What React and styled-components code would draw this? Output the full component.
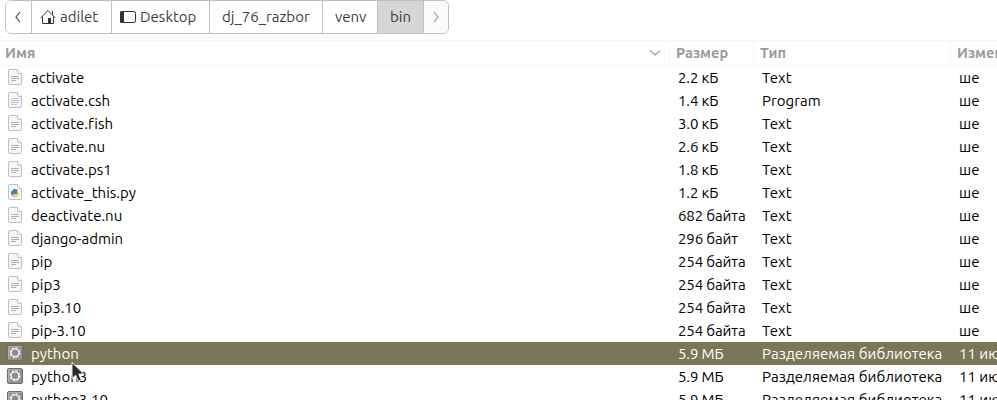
import React from "react";
import styled, { createGlobalStyle } from "styled-components";

const Global = createGlobalStyle`
  * { box-sizing: border-box; }
  html, body { margin: 0; height: 400px; overflow: hidden; background: #fff; }
  body { font-family: Ubuntu, "Noto Sans", sans-serif; font-size: 15px; color: #000; font-variant-ligatures: none; }
`;

const Window = styled.div`
  position: relative;
  width: 997px;
  height: 400px;
  overflow: hidden;
  background: #fff;
`;

const Toolbar = styled.nav`
  height: 40px;
  padding-left: 5px;
  display: flex;
  align-items: flex-start;
`;

const PathBar = styled.div`
  display: flex;
  height: 34px;
  border: 1px solid #c1c1c1;
  border-radius: 6px;
  overflow: hidden;
`;

const Crumb = styled.div`
  width: ${(p) => p.$width}px;
  height: 32px;
  padding-left: ${(p) => p.$pad}px;
  display: flex;
  align-items: center;
  gap: 4px;
  color: #3d3d3d;
  background: ${(p) => p.$bg || "#fff"};
  border-right: ${(p) => (p.$last ? "0" : "1px solid #c1c1c1")};
`;

const Label = styled.span`
  line-height: 20px;
  white-space: nowrap;
`;

const Header = styled.div`
  display: grid;
  grid-template-columns: 670px 84px 197px 46px;
  height: 26px;
  border-top: 1px solid #f7f7f7;
  border-bottom: 1px solid #f7f7f7;
  color: #9a9a9a;
  font-size: 14.6px;
  font-weight: 700;
`;

const HeaderCell = styled.div`
  display: flex;
  align-items: center;
  justify-content: space-between;
  padding: 0 8px 0 ${(p) => p.$pad || 6}px;
  border-right: 1px solid #f7f7f7;

  &:last-child {
    padding-right: 0;
    border-right: 0;
  }
`;

const Row = styled.div`
  display: grid;
  grid-template-columns: 31px 647px 84px 197px 38px;
  align-items: center;
  height: 23px;
  color: ${(p) => (p.$selected ? "#fff" : "#000")};
  background: ${(p) => (p.$selected ? "#7a7757" : "#fff")};
`;

const IconCell = styled.div`
  display: flex;
  align-items: center;
  height: 22px;
  padding-left: 7px;
  align-self: start;
`;

const Cell = styled.div`
  height: 23px;
  line-height: 23px;
  white-space: nowrap;
  letter-spacing: ${(p) => p.$ls || 0}px;
`;

const Pointer = styled.svg`
  position: absolute;
  left: 70px;
  top: 361px;
`;

const Chevron = ({ d, color, w, h }) => (
  <svg width={w} height={h} viewBox={`0 0 ${w} ${h}`} fill="none" stroke={color} strokeWidth="1.15"><path d={d} /></svg>
);

const HomeIcon = () => (
  <svg width="16" height="16" viewBox="0 0 16 16" fill="none" stroke="#333" strokeWidth="1">
    <path d="M.6 8.900 8 1.500l7.400 7.400M2.500 7.500v7h5.500M13.500 7.500v7H10M12.500 5.500V2" />
    <path d="M8 9h3v6H8z" fill="#333" stroke="none" />
  </svg>
);

const DesktopIcon = () => (
  <svg width="16" height="14" viewBox="0 0 16 14">
    <rect x=".5" y="1.500" width="15" height="11" rx="1.600" fill="none" stroke="#333" strokeWidth="1" />
    <path d="M2 1h2v12H2A1.700 1.700 0 0 1 0 11.300V2.700A1.700 1.700 0 0 1 2 1z" fill="#333" />
  </svg>
);

const FileIcon = ({ kind }) => (
  <svg width="16" height="18" viewBox="0 0 16 18">
    <path d="M3 1.500h7.500l4 4V15a1.500 1.500 0 0 1-1.500 1.500H3A1.500 1.500 0 0 1 1.500 15V3A1.500 1.500 0 0 1 3 1.500z" fill="#f7f7f7" stroke="#c0c0c0" />
    <path d="M10.500 1.500V4a1.500 1.500 0 0 0 1.500 1.500h2.500" fill="#fff" stroke="#c0c0c0" />
    {kind === "text" && <path d="M4 8.500h8M4 10.500h8M4 12.500h5" stroke="#b0b0b0" fill="none" />}
    {kind === "script" && (
      <g fill="none">
        <path d="M4 7.500h7M4 9.500h8" stroke="#b4c8f6" />
        <path d="M4 11.500h3M4 13.500h2" stroke="#eca9b5" />
        <path d="M7 11.500h5M8 13.500h2" stroke="#deb4e8" />
        <path d="M6 13.500h2" stroke="#b4dcb7" />
      </g>
    )}
    {kind === "python" && (
      <g>
        <path d="M4 9.500C4 8 5 8 5.500 8c0-1.500.8-2 2.500-2s2.500.6 2.500 2v2c0 .8-.6 1-1.500 1H7.500C6.500 11 6 11.500 6 13 4.500 13 4 11.500 4 9.500z" fill="#4482b8" />
        <path d="M12 10.500c0 1.500-1 2-1.500 2-.1 1.300-.9 2-2.500 2s-2.300-.8-2.300-2c0-1.200.6-1.500 1.800-1.500H9c1 0 1.500-.6 1.500-2.500 1.100 0 1.500.8 1.500 2z" fill="#f8d058" />
      </g>
    )}
  </svg>
);

const GearIcon = () => (
  <svg width="16" height="16" viewBox="0 0 16 16">
    <rect x=".5" y=".5" width="15" height="15" rx="1.500" fill="#929292" stroke="#6c6c6c" />
    <path d="M1.500 14V1.500H14.500" fill="none" stroke="#b0b0b0" />
    <circle cx="8" cy="7.800" r="4.900" fill="none" stroke="#f2f2f2" strokeWidth="1.300" strokeDasharray="1.925 1.925" />
    <circle cx="8" cy="7.800" r="3.900" fill="#8d8d8d" stroke="#f2f2f2" strokeWidth="1.400" />
  </svg>
);

const lib = "Разделяемая библиотека";
const files = [
  ["activate", "2.2 кБ", "Text"],
  ["activate.csh", "1.4 кБ", "Program", "script"],
  ["activate.fish", "3.0 кБ", "Text"],
  ["activate.nu", "2.6 кБ", "Text"],
  ["activate.ps1", "1.8 кБ", "Text"],
  ["activate_this.py", "1.2 кБ", "Text", "python"],
  ["deactivate.nu", "682 байта", "Text"],
  ["django-admin", "296 байт", "Text"],
  ["pip", "254 байта", "Text"],
  ["pip3", "254 байта", "Text"],
  ["pip3.10", "254 байта", "Text"],
  ["pip-3.10", "254 байта", "Text"],
  ["python", "5.9 МБ", lib, "binary"],
  ["python3", "5.9 МБ", lib, "binary"],
  ["python3.10", "5.9 МБ", lib, "binary"],
];

export default function App() {
  return (
    <Window>
      <Global />
      <Toolbar>
        <PathBar>
          <Crumb $width={26} $pad={8}><Chevron w={8} h={12} color="#444" d="M6 1 2 6l4 5" /></Crumb>
          <Crumb $width={80} $pad={8}><HomeIcon /><Label>adilet</Label></Crumb>
          <Crumb $width={98} $pad={8}><DesktopIcon /><Label>Desktop</Label></Crumb>
          <Crumb $width={113} $pad={12}><Label>dj_76_razbor</Label></Crumb>
          <Crumb $width={55} $pad={12}><Label>venv</Label></Crumb>
          <Crumb $width={46} $pad={12} $bg="#d6d6d6"><Label>bin</Label></Crumb>
          <Crumb $width={24} $pad={8} $bg="#fafafa" $last><Chevron w={8} h={12} color="#999" d="m2 1 4 5-4 5" /></Crumb>
        </PathBar>
      </Toolbar>
      <Header>
        <HeaderCell $pad={5}><Label>Имя</Label><Chevron w={12} h={8} color="#999" d="m1 1.500 5 4.500 5-4.500" /></HeaderCell>
        <HeaderCell><Label>Размер</Label></HeaderCell>
        <HeaderCell><Label>Тип</Label></HeaderCell>
        <HeaderCell><Label>Изменён</Label></HeaderCell>
      </Header>
      {files.map(([name, size, type, kind = "text"]) => (
        <Row key={name} $selected={name === "python"}>
          <IconCell>{kind === "binary" ? <GearIcon /> : <FileIcon kind={kind} />}</IconCell>
          <Cell>{name}</Cell>
          <Cell $ls={-0.12}>{size}</Cell>
          <Cell $ls={0.05}>{type}</Cell>
          <Cell>{kind === "binary" ? "11 июл" : "ше"}</Cell>
        </Row>
      ))}
      <Pointer width="16" height="24" viewBox="0 0 16 24">
        <path d="M2 1.500v16l3.600-3.300 2.700 6 3-1.300-2.600-5.700 5-.400z" fill="#2b2b2b" stroke="#eee" strokeWidth="1" />
      </Pointer>
    </Window>
  );
}
